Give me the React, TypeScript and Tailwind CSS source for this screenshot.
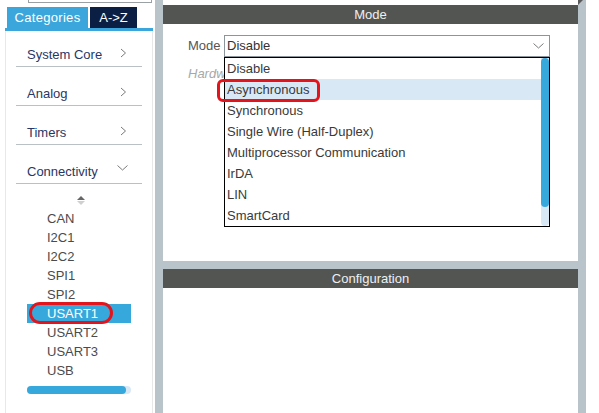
const categories = [
  { name: "System Core", open: false, first: true },
  { name: "Analog", open: false },
  { name: "Timers", open: false },
  { name: "Connectivity", open: true },
];

const peripherals = ["CAN", "I2C1", "I2C2", "SPI1", "SPI2", "USART1", "USART2", "USART3", "USB"];

const modes = [
  "Disable",
  "Asynchronous",
  "Synchronous",
  "Single Wire (Half-Duplex)",
  "Multiprocessor Communication",
  "IrDA",
  "LIN",
  "SmartCard",
];

function ChevronRight() {
  return (
    <svg width="7" height="10" viewBox="0 0 7 10">
      <path d="M1 1 L5.5 5 L1 9" fill="none" stroke="#7a7a7a" strokeWidth="1" />
    </svg>
  );
}

function ChevronDown() {
  return (
    <svg width="11" height="6" viewBox="0 0 11 6">
      <path d="M0.5 0.5 L5.5 5 L10.5 0.5" fill="none" stroke="#7a7a7a" strokeWidth="1" />
    </svg>
  );
}

function Sidebar() {
  return (
    <aside className="flex w-[155px] flex-col bg-white">
      {/* search box, cut off at top */}
      <div className="ml-[28px] h-[3px] w-[124px] border-x border-b border-[#9aa0a4]" />
      <div className="ml-[7px] mt-[4px] flex h-[21px] gap-[2px] leading-[16px] text-white">
        <div className="flex w-[81px] items-center justify-center bg-[#3ba6dc] tracking-[0.3px]">
          Categories
        </div>
        <div className="flex w-[47px] items-center justify-center bg-[#0b1f45]">A-&gt;Z</div>
      </div>
      <div className="ml-[5px] h-[3px] w-[148px] bg-[#3ba6dc]" />
      <div className="ml-[5px] flex w-[148px] flex-1 flex-col border-x border-[#e8e8e8] px-[10px]">
        {categories.map((c) => (
          <div
            key={c.name}
            className={`flex items-end justify-between border-b border-[#b9c1c7] pb-[3px] pl-[11px] leading-[16px] text-[#2a3663] ${
              c.first ? "h-[36px]" : "h-[39px]"
            } ${c.open ? "pr-[14px]" : "pr-[15px]"}`}
          >
            <span>{c.name}</span>
            <span className="flex h-[17px] items-start pt-[2px]">
              {c.open ? <ChevronDown /> : <ChevronRight />}
            </span>
          </div>
        ))}

        <div className="flex h-[25px] items-end justify-center pb-[4px] pl-[4px]">
          <svg width="8" height="9" viewBox="0 0 8 9">
            <polygon points="4,0 8,4 0,4" fill="#666" />
            <polygon points="0,5 8,5 4,9" fill="#d0d0d0" />
          </svg>
        </div>

        <div className="ml-[11px] flex w-[104px] flex-col text-[#4b4b4b]">
          {peripherals.map((p) => (
            <div
              key={p}
              className={`relative flex h-[19px] items-center pl-[20px] pt-[1px] leading-[16px] ${
                p === "USART1" ? "bg-[#37a8db] text-white" : ""
              }`}
            >
              {p}
              {p === "USART1" && (
                <div className="absolute left-[2px] top-[-2px] h-[22px] w-[84px] rounded-full border-[3px] border-[#e3141b]" />
              )}
            </div>
          ))}
        </div>

        <div className="ml-[11px] mt-[6px] h-[8px] w-[104px] rounded-full bg-[#d9e8f5]">
          <div className="h-full w-[99px] rounded-full bg-[#37a8db]" />
        </div>
      </div>
    </aside>
  );
}

function ModePanel() {
  return (
    <div className="relative h-[237px] bg-white pl-[25px] pt-[11px] leading-[16px]">
      <div className="flex items-center">
        <span className="w-[36px] text-[#555]">Mode</span>
        <div className="flex h-[22px] w-[326px] items-center justify-between border border-[#8c959b] pl-[2px] pr-[5px] text-[#333]">
          <span>Disable</span>
          <ChevronDown />
        </div>
      </div>
      {/* only the start of this label shows beside the open list */}
      <div className="mt-[9px] italic text-[#a8a8a8]">Hardw</div>

      {/* open dropdown */}
      <div className="absolute left-[61px] top-[33px] flex h-[170px] w-[326px] border border-black bg-white text-[#3a3a3a]">
        <div className="flex flex-1 flex-col">
          {modes.map((m) => (
            <div
              key={m}
              className={`flex h-[21px] items-center pl-[2px] ${m === "Asynchronous" ? "bg-[#d9e8f5]" : ""}`}
            >
              {m}
            </div>
          ))}
        </div>
        <div className="flex w-[8px] flex-col rounded-b-full bg-[#d9e8f5]">
          <div className="h-[149px] rounded-full bg-[#37a8db]" />
        </div>
        <div className="absolute left-[-8px] top-[21px] h-[23px] w-[103px] rounded-[6px] border-[3px] border-[#e3141b]" />
      </div>
    </div>
  );
}

export default function App() {
  return (
    <div className="flex h-[413px] w-[599px] overflow-hidden bg-white font-['Liberation_Sans',Arial,sans-serif] text-[13px]">
      <Sidebar />
      <div className="w-[8px] bg-[#b8c4ca]" />
      <main className="flex w-[415px] flex-col">
        <div className="h-[5px] bg-white" />
        <div className="flex h-[19px] items-center justify-center bg-[#535553] leading-[16px] text-[#eef0f0]">
          Mode
        </div>
        <ModePanel />
        <div className="h-[8px] bg-[#b8c4ca]" />
        <div className="flex h-[19px] items-center justify-center bg-[#535553] leading-[16px] text-[#eef0f0]">
          Configuration
        </div>
        <div className="flex-1 bg-white" />
      </main>
      <div className="w-[8px] bg-[#b8c4ca]">
        <svg width="5" height="5" viewBox="0 0 5 5">
          <polygon points="0,0 5,0 0,5" fill="#5a5a5a" />
        </svg>
      </div>
      <div className="w-[13px] bg-white" />
    </div>
  );
}
